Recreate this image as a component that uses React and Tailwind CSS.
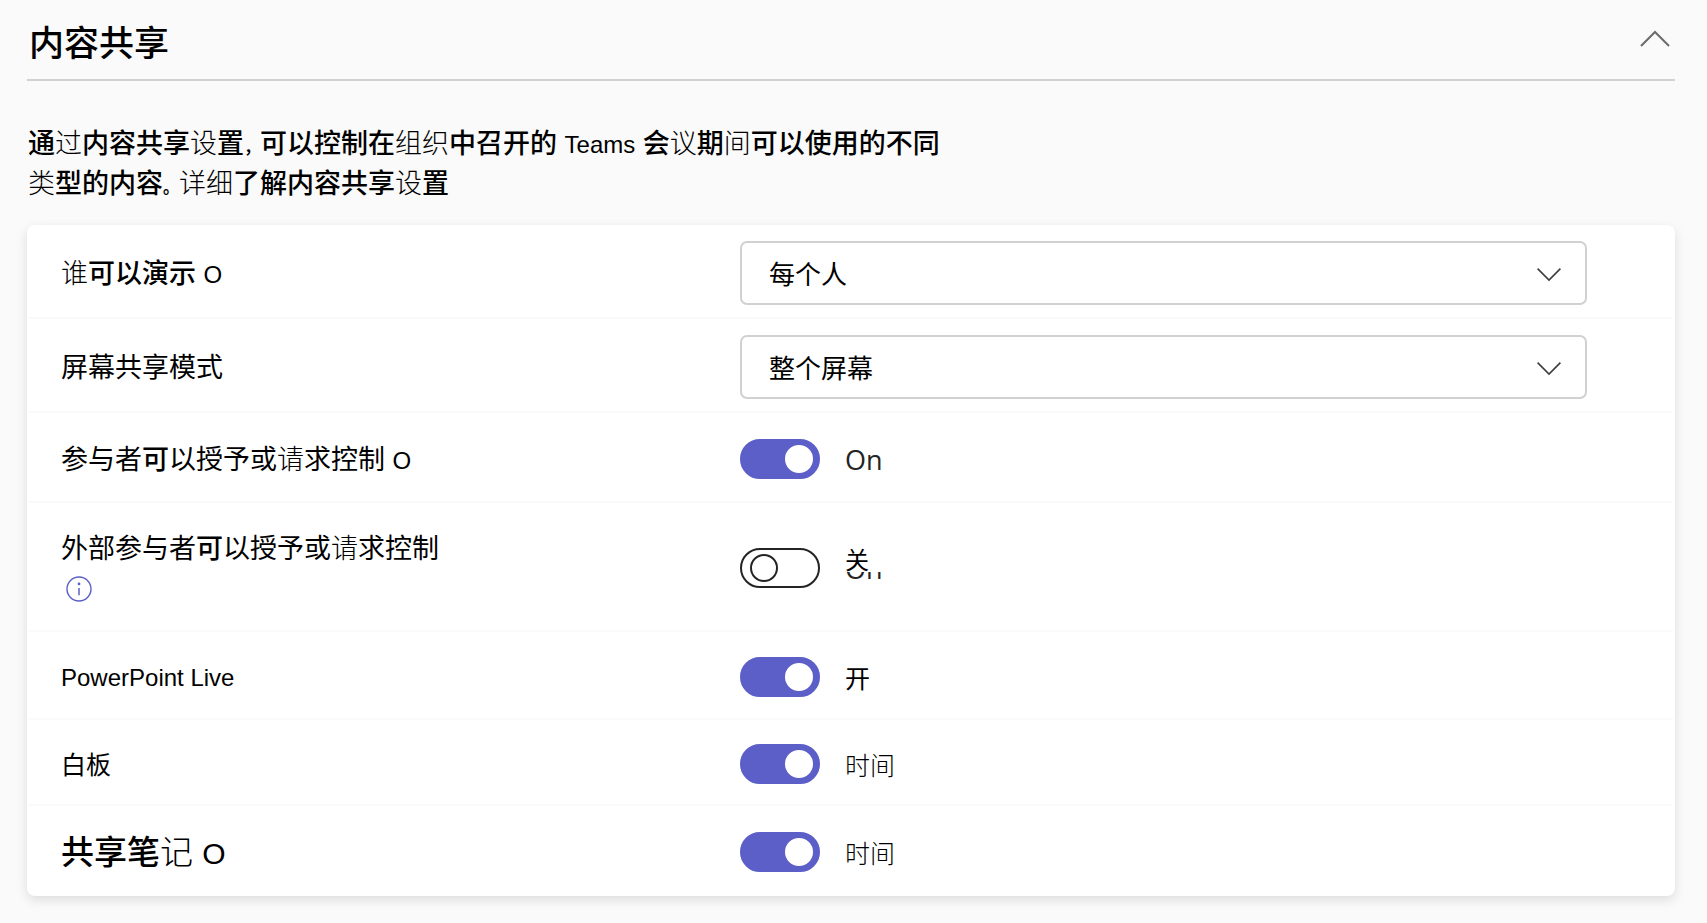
import { useState } from 'react';

// Characters set in a lighter or heavier cut than the running text
const Thin = ({ children }) => <span className="leading-none font-light">{children}</span>;
const Strong = ({ children }) => <span className="leading-none font-medium">{children}</span>;

// Full-width punctuation, set tighter than the running text
const Punct = ({ children }) => <span className="text-base leading-none font-bold">{children}</span>;

const Latin = ({ children }) => <span className="text-2xl leading-none font-normal">{children}</span>;

const ChevronDown = () => (
  <svg
    className="pointer-events-none absolute right-6 top-1/2 h-7 w-7 -translate-y-1/2"
    viewBox="0 0 28 28"
    fill="none"
    stroke="#3d3d3d"
    strokeWidth="1.6"
    aria-hidden="true"
  >
    <path d="M2.6 9.6 14 21 25.4 9.6" />
  </svg>
);

const InfoIcon = () => (
  <svg className="h-[26px] w-[26px]" viewBox="0 0 26 26" fill="none" aria-hidden="true">
    <circle cx="13" cy="13" r="12" stroke="#5b5fc7" strokeWidth="1.4" />
    <circle cx="13" cy="7.9" r="1.4" fill="#5b5fc7" />
    <path d="M13 12v7.2" stroke="#5b5fc7" strokeWidth="1.5" />
  </svg>
);

const Row = ({ id, label, className, children }) => (
  <div className={`grid grid-cols-[711fr_847fr] items-center border-[#fafafa] pr-[86px] ${className}`}>
    <label htmlFor={id} className="pl-8 pt-0.5 text-[27px] leading-10">
      {label}
    </label>
    {children}
  </div>
);

const SelectRow = ({ id, label, options }) => (
  <Row id={id} label={label} className="border-b-2 pt-4 pb-3">
    <div className="relative">
      <select
        id={id}
        className="h-16 w-full appearance-none rounded-[7px] border-2 border-[#d1d1d1] bg-white pt-1 pl-[27px] pr-16 text-[26px]"
      >
        {options.map((option) => (
          <option key={option}>{option}</option>
        ))}
      </select>
      <ChevronDown />
    </div>
  </Row>
);

const ToggleRow = ({ id, label, on = true, status, className }) => (
  <Row id={id} label={label} className={className}>
    <div className="flex h-10 items-center gap-[25px]">
      <input
        id={id}
        type="checkbox"
        role="switch"
        defaultChecked={on}
        className="flex h-10 w-20 shrink-0 appearance-none items-center rounded-full border-2 border-[#242424] bg-white pl-2 before:h-7 before:w-7 before:rounded-full before:border-2 before:border-[#242424] before:content-[''] checked:border-[#5b5fc7] checked:bg-[#5b5fc7] checked:pl-[43px] checked:before:border-white checked:before:bg-white"
      />
      <span className="pt-1 text-[25px] leading-10">{status}</span>
    </div>
  </Row>
);

const English = ({ children }) => (
  <span className="font-['Open_Sans','Noto_Sans',sans-serif] text-[27px] leading-none text-[#242424]">{children}</span>
);

export default function App() {
  const [open, setOpen] = useState(true);

  return (
    <main className="min-h-screen bg-[#fafafa] pb-7 pl-[27px] pr-8 font-['Liberation_Sans','Noto_Sans_CJK_SC',sans-serif] text-black">
      {/* Section header */}
      <header className="flex h-[81px] items-center justify-between border-b-2 border-[#d1d1d1] pl-0.5">
        <h1 className="pt-2 text-[35px] leading-[48px] font-medium">内容共享</h1>
        <button type="button" aria-label="内容共享" aria-expanded={open} onClick={() => setOpen(!open)} className="mr-1">
          <svg className="h-8 w-8" viewBox="0 0 32 32" fill="none" stroke="#6b6b6b" strokeWidth="2" aria-hidden="true">
            <path d="M2 22 16 8l14 14" />
          </svg>
        </button>
      </header>

      {open && (
        <>
          <p className="mt-[43px] mb-[21px] max-w-[920px] pl-px text-[27px] leading-10 font-medium">
            通<Thin>过</Thin>内容共享<Thin>设</Thin>置<Punct>，</Punct>可以控制在<Thin>组织</Thin>中召开的 <Latin>Teams</Latin> 会
            <Thin>议</Thin>期<Thin>间</Thin>可以使用的不同
            <Thin>类</Thin>型的内容<Punct>。</Punct><Thin>详细</Thin>了解内容共享<Thin>设</Thin>置
          </p>

          {/* Settings card */}
          <section className="rounded-lg bg-white px-0.5 shadow-[0_4px_12px_rgba(0,0,0,0.12)]">
            <SelectRow
              id="presenters"
              label={<><Thin>谁</Thin><Strong>可以演示</Strong> <Latin>O</Latin></>}
              options={['每个人']}
            />
            <SelectRow id="sharing-mode" label="屏幕共享模式" options={['整个屏幕']} />
            <ToggleRow
              id="participant-control"
              className="border-b-2 pt-[25px] pb-[21px]"
              label={<>参与者<Strong>可</Strong>以授予或<Thin>请</Thin>求控制 <Latin>O</Latin></>}
              status={<English>On</English>}
            />
            <ToggleRow
              id="external-control"
              className="border-b-2 pt-6 pb-[21px]"
              on={false}
              label={
                <>
                  外部参与者<Strong>可</Strong>以授予或<Thin>请</Thin>求控制
                  <span className="flex h-10 items-center pl-[5px]">
                    <InfoIcon />
                  </span>
                </>
              }
              status={
                <span className="relative block">
                  <English>On</English>
                  <span className="absolute inset-x-0 top-0 h-[22px] bg-white text-2xl leading-[22px]">关</span>
                </span>
              }
            />
            <ToggleRow
              id="powerpoint-live"
              className="border-b-2 pt-[22px] pb-[18px]"
              label={<span className="block text-2xl leading-[44px]">PowerPoint Live</span>}
              status="开"
            />
            <ToggleRow
              id="whiteboard"
              className="border-b-2 pt-[21px] pb-[17px]"
              label={<span className="block text-[25px] leading-[44px]">白板</span>}
              status={<Thin>时间</Thin>}
            />
            <ToggleRow
              id="shared-notes"
              className="pt-[23px] pb-[21px]"
              label={
                <span className="block text-[33px] leading-[44px] font-medium">
                  共享笔<Thin>记</Thin> <span className="text-3xl leading-none font-normal">O</span>
                </span>
              }
              status={<Thin>时间</Thin>}
            />
          </section>
        </>
      )}
    </main>
  );
}
